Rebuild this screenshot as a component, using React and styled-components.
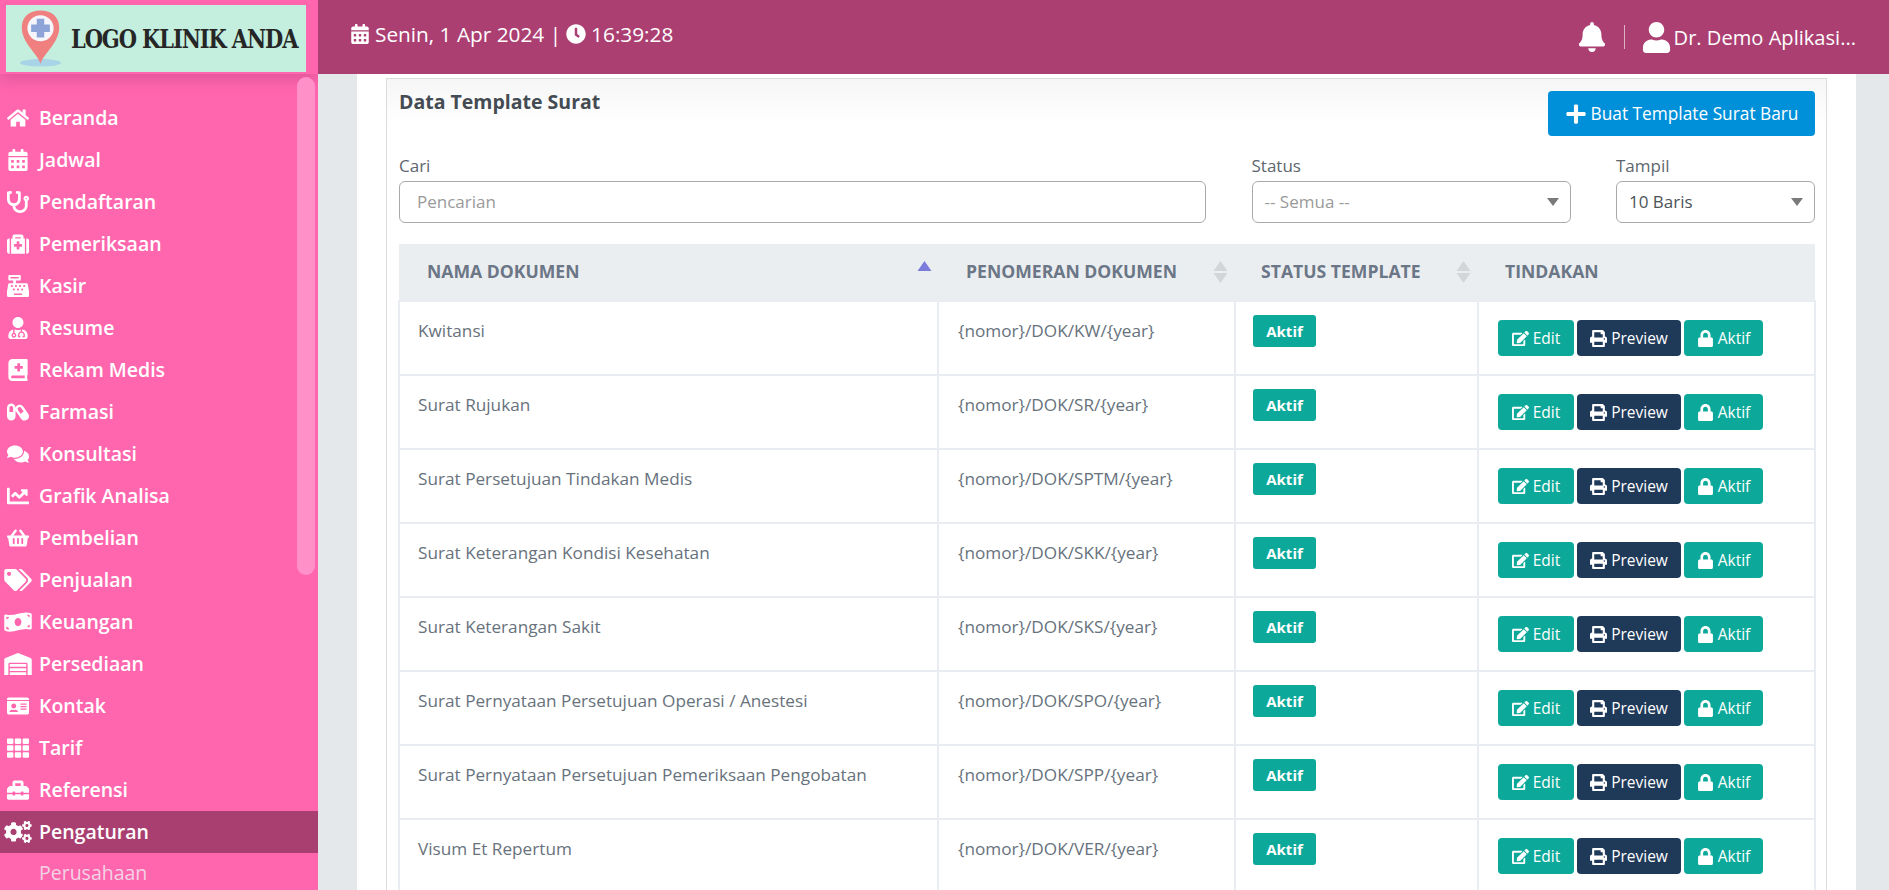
import React from "react";
import styled, { createGlobalStyle } from "styled-components";
import {
  FaHome, FaCalendarAlt, FaStethoscope, FaMedkit, FaCashRegister, FaUserMd,
  FaBookMedical, FaCapsules, FaComments, FaChartLine, FaShoppingBasket, FaTags,
  FaMoneyBillWave, FaWarehouse, FaIdCard, FaTh, FaToolbox, FaCogs, FaClock, FaBell,
  FaUser, FaPlus, FaEdit, FaPrint, FaLock,
} from "react-icons/fa";

const GlobalStyle = createGlobalStyle`
  html, body { margin: 0; padding: 0; height: 100%; overflow: hidden; }
  body { font-family: "Open Sans", "Lato", sans-serif; background: #e4e8eb; }
  * { box-sizing: border-box; }
`;

const Page = styled.div`
  display: grid;
  grid-template-columns: 318px 1fr;
  height: 100vh;
  overflow: hidden;
`;

const Sidebar = styled.aside`
  position: relative;
  background: #ff66ae;
  color: #fff;
  overflow: hidden;
`;

const LogoBar = styled.div`
  height: 74px;
  padding: 5px 12px 5px 6px;
  box-shadow: 0 6px 14px rgba(120, 30, 80, 0.22);
`;

const LogoBox = styled.div`
  height: 67px;
  background: #c4eedd;
  display: flex;
  align-items: center;
  padding-left: 13px;
  gap: 9px;
  svg { flex-shrink: 0; }
`;

const LogoText = styled.span`
  font-family: "DejaVu Serif", serif;
  font-weight: 700;
  font-size: 21px;
  letter-spacing: -1.1px;
  color: #262626;
  white-space: nowrap;
  transform: scaleY(1.22);
  padding-bottom: 1px;
`;

const ScrollThumb = styled.div`
  position: absolute;
  top: 77px;
  left: 297px;
  width: 18px;
  height: 498px;
  border-radius: 9px;
  background: #ff90c8;
`;

const Nav = styled.nav`
  padding-top: 23px;
`;

const NavItem = styled.div`
  height: 42px;
  display: flex;
  align-items: center;
  padding-bottom: 1px;
  font-size: 19.5px;
  font-weight: 600;
  background: ${(p) => (p.$active ? "#a93f70" : "transparent")};
`;

const NavIcon = styled.span`
  width: 39px;
  padding-right: 3px;
  display: flex;
  justify-content: center;
  svg {
    height: 22px;
    width: ${(p) => (p.$wide ? "28px" : "auto")};
    flex-shrink: 0;
  }
`;

const SubItem = styled.div`
  height: 38px;
  padding-left: 39px;
  display: flex;
  align-items: center;
  font-size: 19.5px;
  color: #f3d3e5;
`;

const Content = styled.div`
  display: flex;
  flex-direction: column;
  min-width: 0;
`;

const TopBar = styled.header`
  height: 74px;
  flex-shrink: 0;
  background: #ab3f72;
  color: #fff;
  display: flex;
  align-items: center;
  justify-content: space-between;
  padding: 0 33px 0 32px;
`;

const Clock = styled.div`
  display: flex;
  align-items: center;
  gap: 5px;
  margin-bottom: 6px;
  font-size: 20.8px;
  svg { height: 20px; width: auto; }
`;

const UserArea = styled.div`
  display: flex;
  align-items: center;
  font-size: 20.1px;
`;

const Bell = styled(FaBell)`
  height: 30px;
  width: auto;
`;

const Divider = styled.span`
  width: 1px;
  height: 24px;
  margin: 0 16px 0 17px;
  background: rgba(255, 255, 255, 0.6);
`;

const UserIcon = styled(FaUser)`
  height: 31px;
  width: auto;
  margin-right: 2px;
`;

const Main = styled.main`
  flex: 1;
  margin: 0 33px 0 39px;
  background: #fff;
  padding: 4px 29px 0;
  overflow: hidden;
`;

const Card = styled.section`
  height: 100%;
  border: 1px solid #dcdcdc;
  border-bottom: 0;
  background: linear-gradient(#f6f6f6, #fff 46px);
  padding: 12px 11px 0 12px;
`;

const CardHead = styled.div`
  display: flex;
  justify-content: space-between;
  align-items: flex-start;
  height: 65px;
`;

const Title = styled.h2`
  margin: -1px 0 0;
  font-size: 19.5px;
  line-height: 24px;
  font-weight: 700;
  color: #444b53;
`;

const PrimaryButton = styled.button`
  width: 267px;
  height: 45px;
  display: flex;
  align-items: center;
  justify-content: center;
  gap: 4px;
  border: 0;
  border-radius: 4px;
  background: #0090d9;
  color: #fff;
  font: 500 17.3px "Open Sans", sans-serif;
  svg { height: 22px; width: auto; }
`;

const Filters = styled.div`
  display: grid;
  grid-template-columns: 807px 319px 199px;
  justify-content: space-between;
  height: 88px;
`;

const Field = styled.label`
  display: flex;
  flex-direction: column;
  gap: 5px;
  font-size: 17px;
  line-height: 20px;
  color: #5d666e;
`;

const TextInput = styled.div`
  height: 42px;
  border: 1px solid #aaa;
  border-radius: 6px;
  padding: 0 17px;
  display: flex;
  align-items: center;
  justify-content: space-between;
  font-size: 17px;
  color: ${(p) => p.$color || "#9a9a9a"};
  background: #fff;
`;

const SelectInput = styled(TextInput)`
  padding: 0 11px 0 12px;
`;

const Caret = styled.i`
  width: 0;
  height: 0;
  border-left: 6px solid transparent;
  border-right: 6px solid transparent;
  border-top: 8px solid #7a7a7a;
`;

const Table = styled.table`
  width: calc(100% + 2px);
  margin: 0 -1px;
  table-layout: fixed;
  border-collapse: collapse;
`;

const Th = styled.th`
  position: relative;
  height: 57px;
  padding: 0 0 2px ${(p) => p.$pad}px;
  background: #ebeef1;
  text-align: left;
  font-size: 17.6px;
  font-weight: 700;
  color: #6b7686;
  white-space: nowrap;
`;

const SortMark = styled.svg`
  position: absolute;
  right: ${(p) => p.$right}px;
  top: 16px;
  width: 15px;
  height: 24px;
`;

const Td = styled.td`
  height: 74px;
  padding: ${(p) => p.$top ?? 17}px 0 0 ${(p) => p.$pad}px;
  vertical-align: top;
  border: 2px solid #e9edf2;
  font-size: 17.2px;
  line-height: 24px;
  color: #67727c;
`;

const Badge = styled.span`
  display: inline-flex;
  align-items: center;
  justify-content: center;
  width: 63px;
  height: 32px;
  border-radius: 3px;
  background: #0ca99a;
  color: #fff;
  font-size: 15px;
  font-weight: 700;
`;

const Actions = styled.div`
  display: flex;
  gap: 3px;
`;

const ActionButton = styled.button`
  width: ${(p) => p.$w}px;
  height: 36px;
  display: flex;
  align-items: center;
  justify-content: center;
  gap: 4px;
  padding: 0;
  border: 0;
  border-radius: 4px;
  background: ${(p) => (p.$dark ? "#1f3958" : "#0ca99a")};
  color: #fff;
  font: 500 15.5px "Open Sans", sans-serif;
  svg { height: 17px; width: auto; }
`;

const menu = [
  ["Beranda", FaHome],
  ["Jadwal", FaCalendarAlt],
  ["Pendaftaran", FaStethoscope],
  ["Pemeriksaan", FaMedkit],
  ["Kasir", FaCashRegister],
  ["Resume", FaUserMd],
  ["Rekam Medis", FaBookMedical],
  ["Farmasi", FaCapsules],
  ["Konsultasi", FaComments],
  ["Grafik Analisa", FaChartLine],
  ["Pembelian", FaShoppingBasket],
  ["Penjualan", FaTags, true],
  ["Keuangan", FaMoneyBillWave, true],
  ["Persediaan", FaWarehouse, true],
  ["Kontak", FaIdCard],
  ["Tarif", FaTh],
  ["Referensi", FaToolbox],
  ["Pengaturan", FaCogs, true],
];

const rows = [
  ["Kwitansi", "{nomor}/DOK/KW/{year}"],
  ["Surat Rujukan", "{nomor}/DOK/SR/{year}"],
  ["Surat Persetujuan Tindakan Medis", "{nomor}/DOK/SPTM/{year}"],
  ["Surat Keterangan Kondisi Kesehatan", "{nomor}/DOK/SKK/{year}"],
  ["Surat Keterangan Sakit", "{nomor}/DOK/SKS/{year}"],
  ["Surat Pernyataan Persetujuan Operasi / Anestesi", "{nomor}/DOK/SPO/{year}"],
  ["Surat Pernyataan Persetujuan Pemeriksaan Pengobatan", "{nomor}/DOK/SPP/{year}"],
  ["Visum Et Repertum", "{nomor}/DOK/VER/{year}"],
];

const LogoPin = () => (
  <svg width="43" height="59" viewBox="0 0 46 62">
    <ellipse cx="23" cy="57" rx="22" ry="4" fill="#a9d3e6" />
    <path d="M23 58 C19 46 3 36 3 19 C3 8 11 1 23 1 C35 1 43 8 43 19 C43 36 27 46 23 58 Z" fill="#f08080" />
    <circle cx="23" cy="20" r="14" fill="#f4f6fb" />
    <path d="M19 10 h8 v6 h6 v8 h-6 v6 h-8 v-6 h-6 v-8 h6 Z" fill="#8ea4d8" />
  </svg>
);

const Sort = ({ right, active }) => (
  <SortMark $right={right} viewBox="0 0 15 24">
    <path d="M7.5 1 L14.5 11 H0.5 Z" fill={active ? "#7b7bdc" : "#d3d6d9"} />
    {!active && <path d="M7.5 23 L14.5 13 H0.5 Z" fill="#d3d6d9" />}
  </SortMark>
);

export default function App() {
  return (
    <Page>
      <GlobalStyle />
      <Sidebar>
        <LogoBar>
          <LogoBox>
            <LogoPin />
            <LogoText>LOGO KLINIK ANDA</LogoText>
          </LogoBox>
        </LogoBar>
        <ScrollThumb />
        <Nav>
          {menu.map(([label, Icon, wide]) => (
            <NavItem key={label} $active={label === "Pengaturan"}>
              <NavIcon $wide={wide}>
                <Icon />
              </NavIcon>
              {label}
            </NavItem>
          ))}
          <SubItem>Perusahaan</SubItem>
        </Nav>
      </Sidebar>
      <Content>
        <TopBar>
          <Clock>
            <FaCalendarAlt /> Senin, 1 Apr 2024 | <FaClock /> 16:39:28
          </Clock>
          <UserArea>
            <Bell />
            <Divider />
            <UserIcon />
            Dr. Demo Aplikasi...
          </UserArea>
        </TopBar>
        <Main>
          <Card>
            <CardHead>
              <Title>Data Template Surat</Title>
              <PrimaryButton>
                <FaPlus /> Buat Template Surat Baru
              </PrimaryButton>
            </CardHead>
            <Filters>
              <Field>
                Cari
                <TextInput>Pencarian</TextInput>
              </Field>
              <Field>
                Status
                <SelectInput>
                  -- Semua --
                  <Caret />
                </SelectInput>
              </Field>
              <Field>
                Tampil
                <SelectInput $color="#4c5359">
                  10 Baris
                  <Caret />
                </SelectInput>
              </Field>
            </Filters>
            <Table>
              <colgroup>
                <col style={{ width: 539 }} />
                <col style={{ width: 297 }} />
                <col style={{ width: 243 }} />
                <col />
              </colgroup>
              <thead>
                <tr>
                  <Th $pad={28}>
                    NAMA DOKUMEN
                    <Sort right={6} active />
                  </Th>
                  <Th $pad={28}>
                    PENOMERAN DOKUMEN
                    <Sort right={7} />
                  </Th>
                  <Th $pad={26}>
                    STATUS TEMPLATE
                    <Sort right={7} />
                  </Th>
                  <Th $pad={27}>TINDAKAN</Th>
                </tr>
              </thead>
              <tbody>
                {rows.map(([name, code]) => (
                  <tr key={name}>
                    <Td $pad={18}>{name}</Td>
                    <Td $pad={19}>{code}</Td>
                    <Td $pad={17} $top={13}>
                      <Badge>Aktif</Badge>
                    </Td>
                    <Td $pad={19} $top={18}>
                      <Actions>
                        <ActionButton $w={76}>
                          <FaEdit /> Edit
                        </ActionButton>
                        <ActionButton $w={104} $dark>
                          <FaPrint /> Preview
                        </ActionButton>
                        <ActionButton $w={79}>
                          <FaLock /> Aktif
                        </ActionButton>
                      </Actions>
                    </Td>
                  </tr>
                ))}
              </tbody>
            </Table>
          </Card>
        </Main>
      </Content>
    </Page>
  );
}
